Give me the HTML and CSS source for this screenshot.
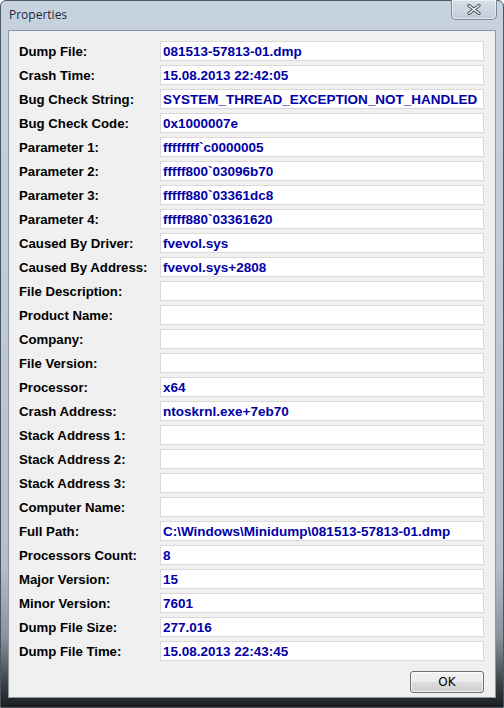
FILE: index.html
```html
<!DOCTYPE html>
<html lang="en">
<head>
    <meta charset="UTF-8">
    <title>Properties</title>
    <link rel="stylesheet" href="styles.css">
</head>
<body>
    <div class="window">
        <div class="titlebar">
            <span class="title">Properties</span>
            <button class="close-btn" title="Close">
                <svg width="14" height="11" viewBox="0 0 14 11">
                    <path d="M2 1.5 L12 9.5 M12 1.5 L2 9.5" stroke="#3d4654" stroke-width="3.2" stroke-linecap="round"/>
                    <path d="M2 1.5 L12 9.5 M12 1.5 L2 9.5" stroke="#ffffff" stroke-width="1.4" stroke-linecap="round"/>
                </svg>
            </button>
        </div>
        <div class="client">
            <div class="props">
                <label>Dump File:</label><div class="field">081513-57813-01.dmp</div>
                <label>Crash Time:</label><div class="field">15.08.2013 22:42:05</div>
                <label>Bug Check String:</label><div class="field">SYSTEM_THREAD_EXCEPTION_NOT_HANDLED</div>
                <label>Bug Check Code:</label><div class="field">0x1000007e</div>
                <label>Parameter 1:</label><div class="field">ffffffff`c0000005</div>
                <label>Parameter 2:</label><div class="field">fffff800`03096b70</div>
                <label>Parameter 3:</label><div class="field">fffff880`03361dc8</div>
                <label>Parameter 4:</label><div class="field">fffff880`03361620</div>
                <label>Caused By Driver:</label><div class="field">fvevol.sys</div>
                <label>Caused By Address:</label><div class="field">fvevol.sys+2808</div>
                <label>File Description:</label><div class="field"></div>
                <label>Product Name:</label><div class="field"></div>
                <label>Company:</label><div class="field"></div>
                <label>File Version:</label><div class="field"></div>
                <label>Processor:</label><div class="field">x64</div>
                <label>Crash Address:</label><div class="field">ntoskrnl.exe+7eb70</div>
                <label>Stack Address 1:</label><div class="field"></div>
                <label>Stack Address 2:</label><div class="field"></div>
                <label>Stack Address 3:</label><div class="field"></div>
                <label>Computer Name:</label><div class="field"></div>
                <label>Full Path:</label><div class="field">C:\Windows\Minidump\081513-57813-01.dmp</div>
                <label>Processors Count:</label><div class="field">8</div>
                <label>Major Version:</label><div class="field">15</div>
                <label>Minor Version:</label><div class="field">7601</div>
                <label>Dump File Size:</label><div class="field">277.016</div>
                <label>Dump File Time:</label><div class="field">15.08.2013 22:43:45</div>
            </div>
            <div class="actions">
                <button class="ok-btn">OK</button>
            </div>
        </div>
    </div>
</body>
</html>
```

FILE: styles.css
```css
html, body {
    margin: 0;
    padding: 0;
    background: #ffffff;
}
.window {
    width: 504px;
    height: 708px;
    box-sizing: border-box;
    padding: 0 7px 9px 7px;
    border: 1px solid #4d5660;
    border-radius: 6px 6px 0 0;
    background: linear-gradient(to bottom, #c6d2de 0%, #bfcbd7 40%, #b4bfca 80%, #8a939c 90%, #3a3e43 97%, #1b1d20 100%);
    display: flex;
    flex-direction: column;
}
.titlebar {
    height: 29px;
    display: flex;
    justify-content: space-between;
    align-items: flex-start;
    flex-shrink: 0;
}
.title {
    font-family: "Open Sans", "Noto Sans", sans-serif;
    font-size: 12px;
    color: #1e2a3a;
    margin-top: 5px;
    margin-left: 1px;
}
.close-btn {
    width: 46px;
    height: 20px;
    margin-top: -1px;
    margin-right: -1px;
    padding: 0;
    border: 1px solid #7e8a98;
    border-top: none;
    border-radius: 0 0 5px 5px;
    background: linear-gradient(to bottom, #d6dfe8, #c2ccd7);
    box-shadow: inset 0 0 0 1px rgba(255, 255, 255, 0.55);
    display: flex;
    align-items: center;
    justify-content: center;
}
.client {
    flex: 1;
    background: #f0f0f0;
    border: 1px solid #8c97a3;
    padding: 10px 11px 0 10px;
    display: flex;
    flex-direction: column;
}
.props {
    display: grid;
    grid-template-columns: 141px 324px;
    grid-auto-rows: 20px;
    row-gap: 4px;
    align-items: center;
}
.props label {
    font-family: "Liberation Sans", Arial, sans-serif;
    font-weight: bold;
    font-size: 13.2px;
    color: #000000;
}
.field {
    height: 20px;
    box-sizing: border-box;
    background: #ffffff;
    border: 1px solid #dadada;
    padding: 1px 3px 0 2px;
    font-family: "Liberation Sans", Arial, sans-serif;
    font-weight: bold;
    font-size: 13.5px;
    line-height: 17px;
    color: #0000a8;
    white-space: nowrap;
    overflow: hidden;
}
.actions {
    display: flex;
    justify-content: flex-end;
    margin-top: 10px;
}
.ok-btn {
    width: 74px;
    height: 22px;
    box-sizing: border-box;
    border: 1px solid #707070;
    border-radius: 3px;
    background: linear-gradient(to bottom, #f2f2f2 0%, #ebebeb 48%, #dddddd 52%, #cfcfcf 100%);
    box-shadow: inset 0 0 0 1px rgba(255, 255, 255, 0.7);
    font-family: "DejaVu Sans", sans-serif;
    font-size: 12px;
    color: #000000;
    padding: 0;
}
```
